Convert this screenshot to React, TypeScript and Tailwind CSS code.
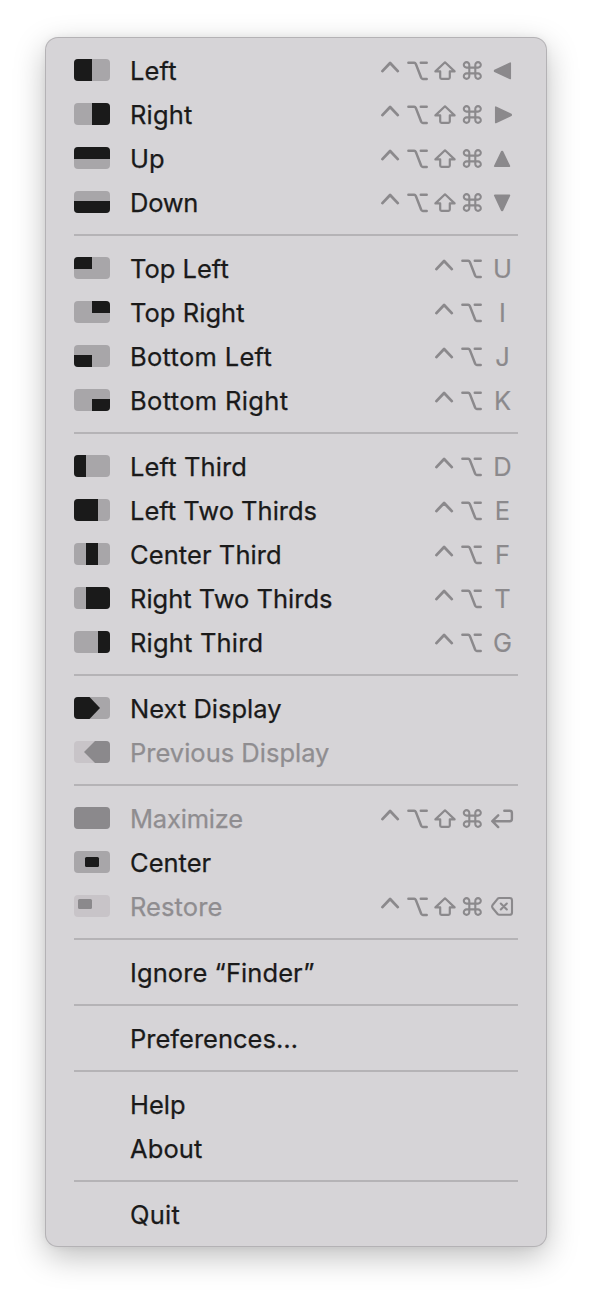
import React from "react";

type Shape = { x: number; y: number; w: number; h: number; r?: number };
type Item = {
  label: string;
  tracking?: string;
  shape?: Shape;
  path?: string;
  disabled?: boolean;
  mods?: 2 | 4;
  keyName?: string;
};

const groups: Item[][] = [
  [
    { label: "Left", tracking: "tracking-[0.15px]", shape: { x: 0, y: 0, w: 18, h: 22 }, mods: 4, keyName: "left" },
    { label: "Right", tracking: "tracking-[0.2px]", shape: { x: 18, y: 0, w: 18, h: 22 }, mods: 4, keyName: "right" },
    { label: "Up", shape: { x: 0, y: 0, w: 36, h: 12 }, mods: 4, keyName: "up" },
    { label: "Down", tracking: "tracking-[-0.25px]", shape: { x: 0, y: 10, w: 36, h: 12 }, mods: 4, keyName: "down" },
  ],
  [
    { label: "Top Left", shape: { x: 0, y: 0, w: 18, h: 12 }, mods: 2, keyName: "U" },
    { label: "Top Right", tracking: "tracking-[0.05px]", shape: { x: 18, y: 0, w: 18, h: 12 }, mods: 2, keyName: "I" },
    { label: "Bottom Left", tracking: "tracking-[0.3px]", shape: { x: 0, y: 10, w: 18, h: 12 }, mods: 2, keyName: "J" },
    { label: "Bottom Right", tracking: "tracking-[0.34px]", shape: { x: 18, y: 10, w: 18, h: 12 }, mods: 2, keyName: "K" },
  ],
  [
    { label: "Left Third", tracking: "tracking-[0.12px]", shape: { x: 0, y: 0, w: 12, h: 22 }, mods: 2, keyName: "D" },
    { label: "Left Two Thirds", shape: { x: 0, y: 0, w: 24, h: 22 }, mods: 2, keyName: "E" },
    { label: "Center Third", tracking: "tracking-[0.08px]", shape: { x: 12, y: 0, w: 12, h: 22 }, mods: 2, keyName: "F" },
    { label: "Right Two Thirds", shape: { x: 12, y: 0, w: 24, h: 22 }, mods: 2, keyName: "T" },
    { label: "Right Third", tracking: "tracking-[0.18px]", shape: { x: 24, y: 0, w: 12, h: 22 }, mods: 2, keyName: "G" },
  ],
  [
    { label: "Next Display", path: "M0 0H15.5L26 11L15.5 22H0Z" },
    { label: "Previous Display", path: "M36 0H21L10 11L21 22H36Z", disabled: true },
  ],
  [
    { label: "Maximize", tracking: "tracking-[-0.2px]", shape: { x: 0, y: 0, w: 36, h: 22 }, disabled: true, mods: 4, keyName: "return" },
    { label: "Center", shape: { x: 11, y: 6, w: 14, h: 10, r: 1.5 } },
    { label: "Restore", tracking: "tracking-[0.08px]", shape: { x: 4, y: 4, w: 14, h: 10, r: 1.5 }, disabled: true, mods: 4, keyName: "delete" },
  ],
  [{ label: "Ignore “Finder”", tracking: "tracking-[0.08px]" }],
  [{ label: "Preferences…" }],
  [{ label: "Help" }, { label: "About", tracking: "tracking-[0.1px]" }],
  [{ label: "Quit", tracking: "tracking-[0.25px]" }],
];

function WindowIcon({ item }: { item: Item }) {
  const { shape, path, disabled } = item;
  const back = disabled ? "bg-[#c8c4c8]" : "bg-[#a8a6a9]";
  const fill = disabled ? "#8b898c" : "#1a1a1a";
  if (!shape && !path) return <span className="w-9 shrink-0" />;
  return (
    <span className={`h-[22px] w-9 shrink-0 overflow-hidden rounded-[4px] ${back}`}>
      <svg width="36" height="22" viewBox="0 0 36 22" fill={fill} className="block">
        {shape && <rect x={shape.x} y={shape.y} width={shape.w} height={shape.h} rx={shape.r ?? 0} />}
        {path && <path d={path} />}
      </svg>
    </span>
  );
}

const stroked: Record<string, { d: string; weight: number }> = {
  control: { d: "M5.4 23.1L13.1 15L20.8 23.1", weight: 2.8 },
  option: {
    d: "M4.4 14.8H10.2Q11.3 14.8 11.8 15.9L17.2 29.8Q17.7 30.9 18.8 30.9H22.7M16.8 14.8H22.7",
    weight: 2.5,
  },
  shift: {
    d: "M14 14.3L4.4 23.4H9.2V29.6Q9.2 30.9 10.5 30.9H17.5Q18.8 30.9 18.8 29.6V23.4H23.6Z",
    weight: 2.2,
  },
  command: {
    d: "M11.2 19.6H8.6A2.75 2.75 0 1 1 11.3 16.9V28.1A2.75 2.75 0 1 1 8.6 25.4H20A2.75 2.75 0 1 1 17.3 28.1V16.9A2.75 2.75 0 1 1 20 19.6H11.2",
    weight: 2.1,
  },
  return: {
    d: "M19.3 14.8H24.7Q26.9 14.8 26.9 17V23Q26.9 25.2 24.7 25.2H8M13.2 19.3L7.3 25.2L13.2 31.1",
    weight: 2.4,
  },
  delete: {
    d: "M14.3 14H24.6Q27 14 27 16.4V28.4Q27 30.8 24.6 30.8H14.3Q13.3 30.8 12.6 30L7.6 24Q6.6 22.5 7.6 21L12.6 14.8Q13.3 14 14.3 14ZM15.8 19.5L21.8 25.5M21.8 19.5L15.8 25.5",
    weight: 2.1,
  },
};

const solid: Record<string, string> = {
  left: "M9.7 22.5L25.2 15.2V30.4L9.7 23.3Z",
  right: "M26.1 22.5L10.8 15.2V30.4L26.1 23.3Z",
  up: "M16.8 15.5L9.8 30.1H24.4L17.4 15.5Z",
  down: "M16.8 30.3L9.8 15.4H24.4L17.4 30.3Z",
};

function Glyph({ name }: { name: string }) {
  const wide = !["control", "option", "shift", "command"].includes(name);
  const width = wide ? 35 : 27;
  return (
    <svg width={width} height="44" viewBox={`0 0 ${width} 44`} className="shrink-0">
      {solid[name] ? (
        <path d={solid[name]} fill="#8b898c" stroke="#8b898c" strokeWidth="1.7" strokeLinejoin="round" />
      ) : (
        <path
          d={stroked[name].d}
          fill="none"
          stroke="#8b898c"
          strokeWidth={stroked[name].weight}
          strokeLinecap="round"
          strokeLinejoin="round"
        />
      )}
    </svg>
  );
}

function Shortcut({ item }: { item: Item }) {
  if (!item.mods || !item.keyName) return null;
  const mods = item.mods === 4 ? ["control", "option", "shift", "command"] : ["control", "option"];
  return (
    <span className="-mr-0.5 ml-auto flex h-11 items-center">
      {mods.map((m) => (
        <Glyph key={m} name={m} />
      ))}
      {item.keyName.length > 1 ? (
        <Glyph name={item.keyName} />
      ) : (
        <span className="w-[35px] pt-0.5 text-center text-[#8b898c] [-webkit-text-stroke:0.15px_currentColor]">
          {item.keyName}
        </span>
      )}
    </span>
  );
}

export default function App() {
  return (
    <main className="h-[1300px] w-[592px] bg-white px-[46px] pt-[38px] font-['Inter',sans-serif] text-[25.5px] leading-[42px]">
      <div
        role="menu"
        className="w-[500px] rounded-[12px] bg-[#d6d4d7] px-7 py-2.5 shadow-[0_0_0_1px_#b4b2b5,0_10px_32px_rgba(0,0,0,0.27),0_0_8px_rgba(0,0,0,0.06)]"
      >
        {groups.map((group, i) => (
          <React.Fragment key={i}>
            {i > 0 && <div role="separator" className="my-2.5 h-0.5 bg-[#b5b3b6]" />}
            {group.map((item) => (
              <div
                key={item.label}
                role="menuitem"
                className={`flex h-11 items-center whitespace-nowrap ${item.disabled ? "text-[#8f8d90]" : "text-[#1a1a1a]"}`}
              >
                <WindowIcon item={item} />
                <span className={`ml-5 pt-0.5 [-webkit-text-stroke:0.25px_currentColor] ${item.tracking ?? ""}`}>
                  {item.label}
                </span>
                <Shortcut item={item} />
              </div>
            ))}
          </React.Fragment>
        ))}
      </div>
    </main>
  );
}
